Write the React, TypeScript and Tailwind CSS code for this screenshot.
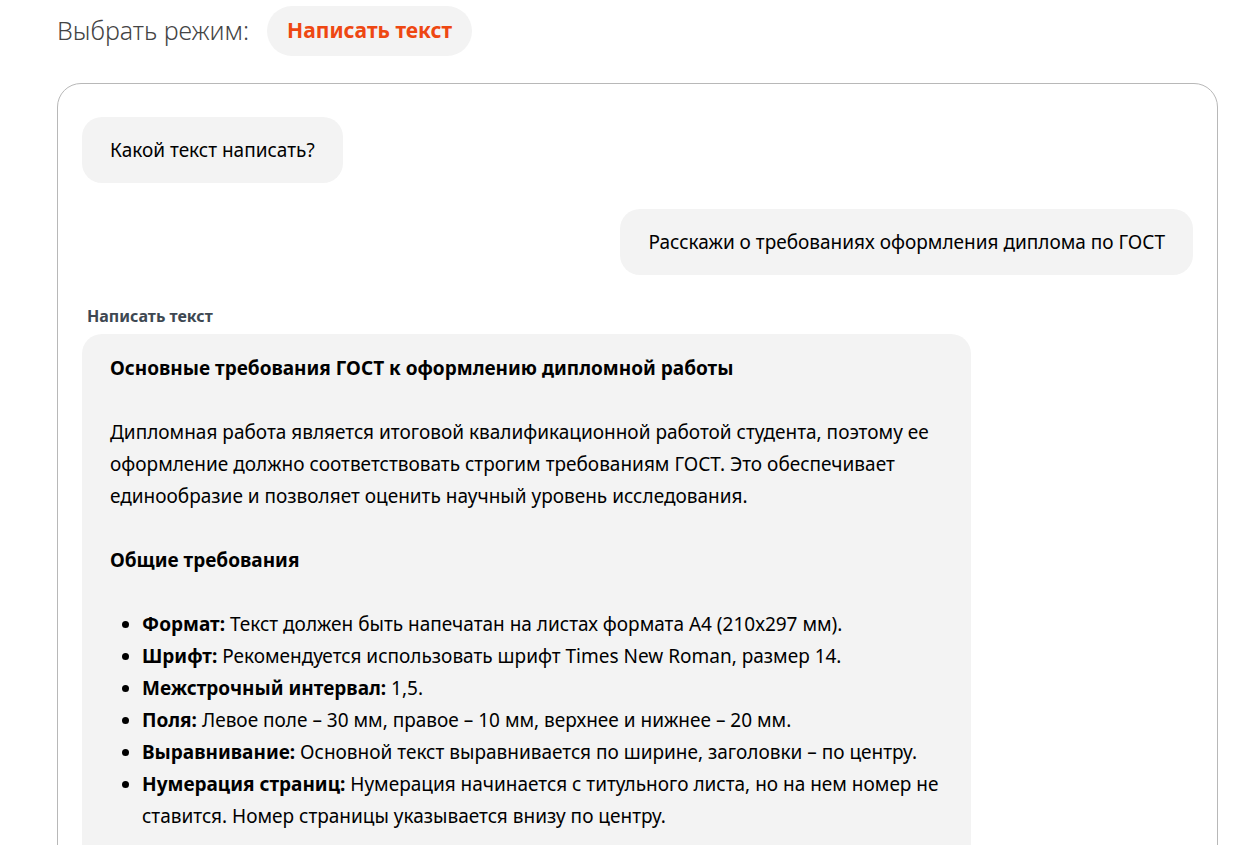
import React from 'react'

const items: [string, string][] = [
  ['Формат:', 'Текст должен быть напечатан на листах формата А4 (210х297 мм).'],
  ['Шрифт:', 'Рекомендуется использовать шрифт Times New Roman, размер 14.'],
  ['Межстрочный интервал:', '1,5.'],
  ['Поля:', 'Левое поле – 30 мм, правое – 10 мм, верхнее и нижнее – 20 мм.'],
  ['Выравнивание:', 'Основной текст выравнивается по ширине, заголовки – по центру.'],
  ['Нумерация страниц:', 'Нумерация начинается с титульного листа, но на нем номер не ставится. Номер страницы указывается внизу по центру.'],
]

export default function App() {
  return (
    <div className="h-[845px] overflow-hidden bg-white pl-[57px] pr-[24px] pt-[6px] font-['Noto_Sans',sans-serif]">
      <div className="flex items-center gap-[18px]">
        <span className="text-[25px] font-light text-[#444]">Выбрать режим:</span>
        <button className="h-[50px] rounded-full bg-[#f3f3f3] px-[20px] text-[21px] font-bold text-[#ee4712]">
          Написать текст
        </button>
      </div>

      <div className="mt-[27px] h-[900px] rounded-[24px] border border-[#b8b8b8] px-[24px] pt-[33px]">
        <div className="flex flex-col">
          <div className="self-start rounded-[20px] bg-[#f3f3f3] px-[28px] py-[21px] text-[19px] leading-[24px] text-black">
            Какой текст написать?
          </div>

          <div className="mt-[26px] self-end rounded-[20px] bg-[#f3f3f3] px-[28px] py-[21px] text-[19px] leading-[24px] text-black">
            Расскажи о требованиях оформления диплома по ГОСТ
          </div>

          <div className="mt-[31px] pl-[5px] text-[16px] font-bold leading-[20px] text-[#3e4852]">Написать текст</div>

          <div className="mt-[8px] w-[80%] rounded-t-[20px] bg-[#f3f3f3] px-[28px] pt-[18px] pb-[30px] text-[19px] leading-[32px] text-black">
            <p className="font-bold">Основные требования ГОСТ к оформлению дипломной работы</p>
            <p className="mt-[32px]">
              Дипломная работа является итоговой квалификационной работой студента, поэтому ее оформление должно
              соответствовать строгим требованиям ГОСТ. Это обеспечивает единообразие и позволяет оценить научный
              уровень исследования.
            </p>
            <p className="mt-[32px] font-bold">Общие требования</p>
            <ul className="mt-[32px] list-disc pl-[32px]">
              {items.map(([b, t]) => (
                <li key={b}>
                  <b>{b}</b> {t}
                </li>
              ))}
            </ul>
          </div>
        </div>
      </div>
    </div>
  )
}
